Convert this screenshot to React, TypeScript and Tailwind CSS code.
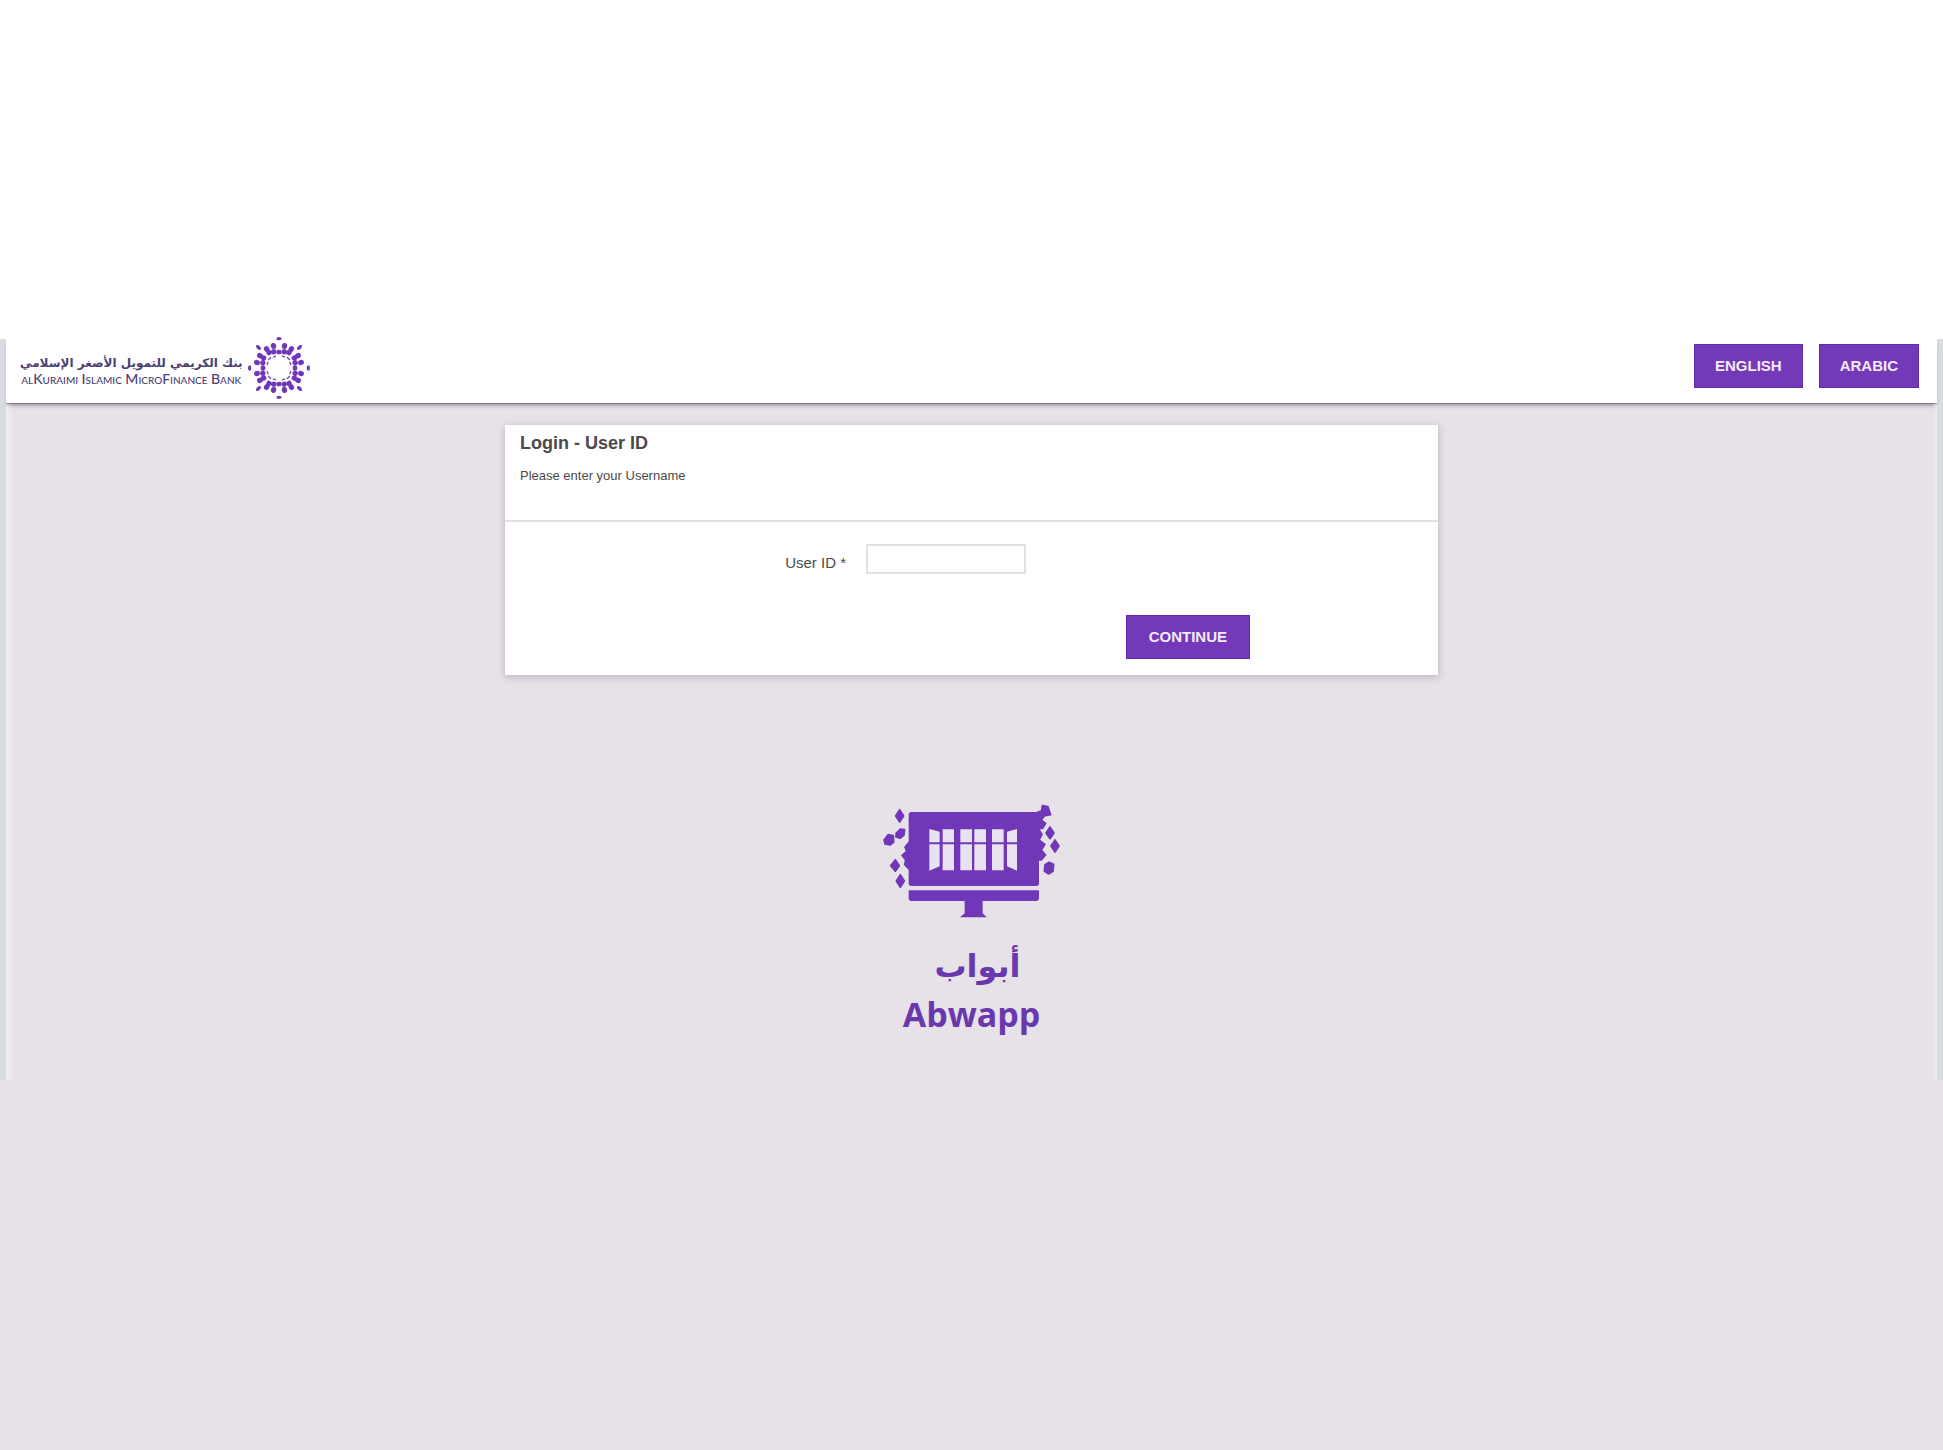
const PURPLE = "#7038b8";

function ring(radius: number, angles: number[], rx: number, ry: number) {
  return angles.flatMap((a) =>
    [0, 90, 180, 270].map((q) => (
      <ellipse
        key={`${radius}-${a}-${q}`}
        cx="0"
        cy={-radius}
        rx={rx}
        ry={ry}
        transform={`rotate(${a + q})`}
      />
    ))
  );
}

function Emblem() {
  return (
    <svg viewBox="-96 -87 192 192" className="size-16 shrink-0 overflow-visible" fill={PURPLE} aria-hidden="true">
      {ring(88, [0], 8, 5)}
      {ring(87, [45], 5, 9)}
      {ring(68, [-14, 14, 33, 57], 8, 9)}
      {ring(48, [0], 8, 7)}
      {ring(51, [-18, 18], 8, 8)}
      {ring(55, [33, 57], 8, 8)}
      {ring(37, [-22, 22], 6, 2)}
      {ring(40, [45], 7, 2)}
    </svg>
  );
}

function Monitor() {
  return (
    <svg viewBox="6 0 660 420" className="h-[140px] w-[220px]" fill={PURPLE} aria-hidden="true">
      <rect x="146" y="66" width="391" height="222" rx="8" />
      <path d="M146 301h391v22q0 10-10 10H156q-10 0-10-10z" />
      <path d="M314 332h54v38l12 12H300l14-12z" />
      <g fill="#e8e2ee">
        <path d="M208 117l31 8v32h-31zM208 163h31v66l-31 13z" />
        <path d="M248 118h34v39h-34zM248 163h34v78h-34z" />
        <path d="M301 118h35v39h-35zM301 163h35v78h-35z" />
        <path d="M343 118h35v39h-35zM343 163h35v78h-35z" />
        <path d="M396 118h35v39h-35zM396 163h35v78h-35z" />
        <path d="M441 125l30-8v40h-30zM441 163h30v79l-30-13z" />
      </g>
      <g stroke={PURPLE} strokeWidth="5" strokeLinejoin="round">
        <path d="M119 59l12 19-12 18-12-18zM108 130l13-13 13 2-2 16-12 10-12-4zM72 150l12-16 16 3 1 19-11 9-15-3zM106 209l12 18-12 17-14-17zM121 254l12 19-12 19-12-19z" />
        <path d="M148 156l-13 15 5 13-14 12 11 14-3 14 14 14z" />
        <path d="M529 68l16-6 2-15 17 3 8 24-19 4-9 12 13 10-9 15h-13l11 18-9 17 18 13-11 17 13 15-13 15h-11z" />
        <path d="M570 111l12 18-12 17-12-17zM585 150l12 18-12 18-12-18zM555 224l12-7 14 6-2 21-13 8-13-9z" />
      </g>
    </svg>
  );
}

const buttonClass =
  "flex h-11 items-center justify-center border border-[#6428ae] bg-[#7439b9] text-[15px] font-bold text-[#f3ebfb]";

export default function App() {
  return (
    <div className="min-h-screen bg-[#e6e2e8] font-['Liberation_Sans',Arial,sans-serif] text-[#4a4a4a]">
      <div className="h-[339px] bg-white" />
      <div className="bg-[#d9dce1] px-[6px]">
        <div className="bg-[linear-gradient(to_right,#f1ecf2,#ece8ee_5px,#e6e2e8_7px,#e6e2e8_calc(100%-4px),#efebf0)]">
          <header className="flex h-16 items-start justify-between bg-white pr-[18px] pl-[14px] shadow-[0_4px_4px_-2px_rgba(80,70,85,0.6),0_1px_0_#aaa4ac]">
            <div className="flex items-center gap-1">
              <div className="flex flex-col text-center whitespace-nowrap text-[#4b4175]">
                <span dir="rtl" lang="ar" className="font-['DejaVu_Sans',sans-serif] text-[12px] leading-4 font-bold">
                  بنك الكريمي للتمويل الأصغر الإسلامي
                </span>
                <span className="font-['Lato',sans-serif] text-[14px] leading-4 font-medium [font-variant:small-caps]">
                  alKuraimi Islamic MicroFinance Bank
                </span>
              </div>
              <Emblem />
            </div>
            <nav className="flex gap-4 pt-[5px]">
              <button type="button" className={`${buttonClass} px-5`}>ENGLISH</button>
              <button type="button" className={`${buttonClass} px-5`}>ARABIC</button>
            </nav>
          </header>
          <main className="flex flex-col items-center px-4 pt-[22px] pb-[42px]">
            <form className="w-full max-w-[933px] bg-white shadow-[0_2px_7px_1px_rgba(90,75,95,0.25)]">
              <div className="h-[97px] border-b-2 border-[#e2e2e2] px-[15px] pt-[6px]">
                <h1 className="text-[18px] leading-6 font-bold">Login - User ID</h1>
                <p className="mt-[11px] text-[13px] leading-5">Please enter your Username</p>
              </div>
              <div className="grid grid-cols-[341px_1fr] items-center gap-5 pt-[22px]">
                <label htmlFor="user-id" className="pt-2 text-right text-[15px] leading-5">
                  User ID *
                </label>
                <input id="user-id" type="text" className="h-[30px] w-40 border-2 border-[#e2e2e2] bg-white px-2 text-sm outline-none" />
              </div>
              <div className="flex justify-end pt-[41px] pr-[188px] pb-4">
                <button type="button" className={`${buttonClass} px-[22px]`}>CONTINUE</button>
              </div>
            </form>
            <div className="flex flex-col items-center pt-[115px] font-bold text-[#6a38ae]">
              <Monitor />
              <span dir="rtl" lang="ar" className="mt-3 pl-3 font-['DejaVu_Sans',sans-serif] text-[32px] leading-[48px]">أبواب</span>
              <span className="font-['Open_Sans',sans-serif] text-[34px] leading-[48px]">Abwapp</span>
            </div>
          </main>
        </div>
      </div>
    </div>
  );
}
